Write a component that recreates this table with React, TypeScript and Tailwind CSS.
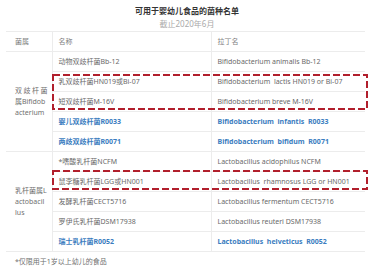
import React from "react";

type Row = {
  name: string;
  latin: string;
  hot?: boolean;
};

const bifido: Row[] = [
  { name: "动物双歧杆菌Bb-12", latin: "Bifidobacterium animalis Bb-12" },
  { name: "乳双歧杆菌HN019或Bi-07", latin: "Bifidobacterium  lactis HN019 or Bi-07" },
  { name: "短双歧杆菌M-16V", latin: "Bifidobacterium breve M-16V" },
  { name: "婴儿双歧杆菌R0033", latin: "Bifidobacterium  infantis  R0033", hot: true },
  { name: "两歧双歧杆菌R0071", latin: "Bifidobacterium  bifidum  R0071", hot: true },
];

const lacto: Row[] = [
  { name: "*嗜酸乳杆菌NCFM", latin: "Lactobacillus acidophilus NCFM" },
  { name: "鼠李糖乳杆菌LGG或HN001", latin: "Lactobacillus  rhamnosus LGG or HN001" },
  { name: "发酵乳杆菌CECT5716", latin: "Lactobacillus fermentum CECT5716" },
  { name: "罗伊氏乳杆菌DSM17938", latin: "Lactobacillus reuteri DSM17938" },
  { name: "瑞士乳杆菌R0052", latin: "Lactobacillus  helveticus  R0052", hot: true },
];

// the genus label wraps inside a narrow column, lines kept as in the picture
function Group({ label, spread, rows }: { label: string[]; spread?: boolean; rows: Row[] }) {
  return (
    <>
      {rows.map((r, i) => (
        <tr key={r.name} className="h-[20px]">
          {i === 0 ? (
            <td
              rowSpan={rows.length}
              className="border-b border-[#ececec] pl-[9px] align-middle"
            >
              <div className="w-[29px] whitespace-nowrap leading-[11px] text-[#707070]">
                {label.map((line, j) => (
                  <div
                    key={j}
                    className={spread && j === 0 ? "tracking-[1.5px]" : ""}
                  >
                    {line}
                  </div>
                ))}
              </div>
            </td>
          ) : null}
          <td
            className={`border-b border-l border-[#ececec] pl-[6px] whitespace-nowrap ${
              r.hot ? "font-bold text-[#3b7dc0]" : "text-[#6a6a6a]"
            }`}
          >
            {r.name}
          </td>
          <td
            className={`border-b border-l border-[#ececec] pl-[6px] whitespace-pre ${
              r.hot ? "font-bold text-[#3b7dc0]" : "text-[#6a6a6a]"
            }`}
          >
            {r.latin}
          </td>
        </tr>
      ))}
    </>
  );
}

function Mark({ top, height }: { top: number; height: number }) {
  return (
    <svg
      className="absolute left-[52px]"
      style={{ top }}
      width={316}
      height={height}
    >
      <rect
        x={1}
        y={1}
        width={314}
        height={height - 2}
        fill="none"
        stroke="#b11f2c"
        strokeWidth={2}
        strokeDasharray="7 3"
      />
    </svg>
  );
}

export default function App() {
  return (
    <div
      className="relative h-[267px] w-[374px] overflow-hidden bg-white text-[7px]"
      style={{ fontFamily: '"Noto Sans", "Noto Sans CJK SC", sans-serif' }}
    >
      <div className="pt-[5px] text-center text-[8px] font-bold leading-[11px] text-[#333]">
        可用于婴幼儿食品的菌种名单
      </div>
      <div className="mt-[2px] text-center text-[8px] leading-[12px] text-[#aaaaaa]">
        截止2020年6月
      </div>

      <table className="ml-[6px] mt-[1px] w-[359px] table-fixed border-collapse leading-[10px]">
        <colgroup>
          <col className="w-[46px]" />
          <col className="w-[159px]" />
          <col />
        </colgroup>
        <thead>
          <tr className="h-[20px] text-[#808080]">
            <th className="border-y border-[#ececec] pl-[9px] text-left font-normal">菌属</th>
            <th className="border-y border-l border-[#ececec] pl-[6px] text-left font-normal">名称</th>
            <th className="border-y border-l border-[#ececec] pl-[6px] text-left font-normal">拉丁名</th>
          </tr>
        </thead>
        <tbody>
          <Group label={["双歧杆菌", "属Bifidob", "acterium"]} spread rows={bifido} />
          <Group label={["乳杆菌属L", "actobacil", "lus"]} rows={lacto} />
        </tbody>
      </table>

      <div className="pl-[15px] pt-[5px] text-[#707070]">*仅限用于1岁以上幼儿的食品</div>

      <Mark top={74} height={36} />
      <Mark top={170} height={20} />
    </div>
  );
}
